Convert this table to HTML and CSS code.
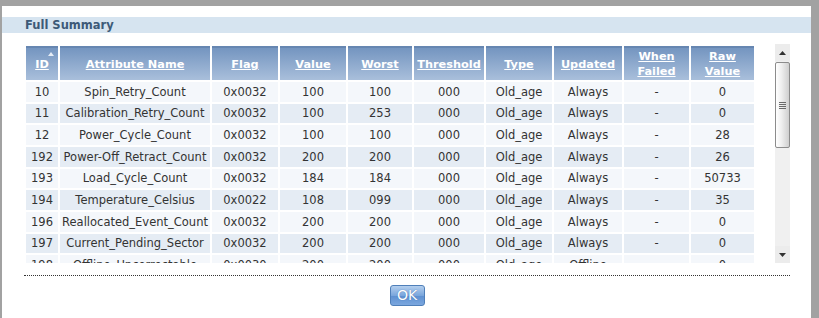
FILE: index.html
```html
<!DOCTYPE html>
<html>
<head>
<meta charset="utf-8">
<link rel="stylesheet" href="styles.css">
</head>
<body>
<div class="dialog">
  <div class="titlebar">Full Summary</div>
  <div class="content">
    <div class="scroller">
      <div class="viewport">
        <table class="grid">
          <colgroup>
            <col class="c-id"><col class="c-name"><col class="c-flag"><col class="c-value"><col class="c-worst"><col class="c-thr"><col class="c-type"><col class="c-upd"><col class="c-when"><col class="c-raw">
          </colgroup>
          <thead>
            <tr>
              <th class="sorted"><a>ID</a><span class="sort-arrow"></span></th>
              <th><a>Attribute Name</a></th>
              <th><a>Flag</a></th>
              <th><a>Value</a></th>
              <th><a>Worst</a></th>
              <th><a>Threshold</a></th>
              <th><a>Type</a></th>
              <th><a>Updated</a></th>
              <th><a>When<br>Failed</a></th>
              <th><a>Raw<br>Value</a></th>
            </tr>
          </thead>
          <tbody>
            <tr><td>10</td><td>Spin_Retry_Count</td><td>0x0032</td><td>100</td><td>100</td><td>000</td><td>Old_age</td><td>Always</td><td>-</td><td>0</td></tr>
            <tr><td>11</td><td>Calibration_Retry_Count</td><td>0x0032</td><td>100</td><td>253</td><td>000</td><td>Old_age</td><td>Always</td><td>-</td><td>0</td></tr>
            <tr><td>12</td><td>Power_Cycle_Count</td><td>0x0032</td><td>100</td><td>100</td><td>000</td><td>Old_age</td><td>Always</td><td>-</td><td>28</td></tr>
            <tr><td>192</td><td>Power-Off_Retract_Count</td><td>0x0032</td><td>200</td><td>200</td><td>000</td><td>Old_age</td><td>Always</td><td>-</td><td>26</td></tr>
            <tr><td>193</td><td>Load_Cycle_Count</td><td>0x0032</td><td>184</td><td>184</td><td>000</td><td>Old_age</td><td>Always</td><td>-</td><td>50733</td></tr>
            <tr><td>194</td><td>Temperature_Celsius</td><td>0x0022</td><td>108</td><td>099</td><td>000</td><td>Old_age</td><td>Always</td><td>-</td><td>35</td></tr>
            <tr><td>196</td><td>Reallocated_Event_Count</td><td>0x0032</td><td>200</td><td>200</td><td>000</td><td>Old_age</td><td>Always</td><td>-</td><td>0</td></tr>
            <tr><td>197</td><td>Current_Pending_Sector</td><td>0x0032</td><td>200</td><td>200</td><td>000</td><td>Old_age</td><td>Always</td><td>-</td><td>0</td></tr>
            <tr><td>198</td><td>Offline_Uncorrectable</td><td>0x0030</td><td>200</td><td>200</td><td>000</td><td>Old_age</td><td>Offline</td><td>-</td><td>0</td></tr>
          </tbody>
        </table>
      </div>
      <div class="scrollbar">
        <div class="sb-btn"><svg width="7" height="4" viewBox="0 0 7 4"><path d="M0 4 L3.5 0 L7 4 Z" fill="#333"/></svg></div>
        <div class="sb-thumb"><span class="grip"></span><span class="grip"></span><span class="grip"></span><span class="grip"></span></div>
        <div class="sb-track"></div>
        <div class="sb-btn"><svg width="7" height="4" viewBox="0 0 7 4"><path d="M0 0 L7 0 L3.5 4 Z" fill="#333"/></svg></div>
      </div>
    </div>
    <div class="divider"></div>
    <div class="actions"><button class="ok">OK</button></div>
  </div>
</div>
</body>
</html>
```
FILE: styles.css
```css
html, body {
  margin: 0;
  padding: 0;
  background: #a2a2a2;
  height: 318px;
  overflow: hidden;
}
.dialog {
  margin: 6px 0 0 2px;
  width: 809px;
  height: 312px;
  background: #fff;
  padding-top: 11px;
  box-sizing: border-box;
}
.titlebar {
  height: 16px;
  background: #d6e4f0;
  font: bold 11.5px/16px "DejaVu Sans", Verdana, sans-serif;
  color: #3d5a78;
  padding-left: 23px;
}
.content {
  padding: 11px 21px 0 22px;
}
.scroller {
  display: flex;
  height: 219px;
}
.viewport {
  flex: 1;
  overflow: hidden;
}
.grid {
  border-collapse: separate;
  border-spacing: 2px;
  table-layout: fixed;
  width: 732px;
  font: 11.5px "DejaVu Sans", Verdana, sans-serif;
  color: #333;
}
.c-id { width: 32px; }
.c-name { width: 150px; }
.c-flag { width: 66px; }
.c-value { width: 66px; }
.c-worst { width: 64px; }
.c-thr { width: 70px; }
.c-type { width: 66px; }
.c-upd { width: 68px; }
.c-when { width: 65px; }
.c-raw { width: 63px; }
.grid th {
  height: 34px;
  padding: 0;
  box-sizing: border-box;
  background: linear-gradient(#7495c0, #a9bfdb);
  border-top: 2px solid #6686b1;
  font-size: 11.3px;
  font-weight: bold;
  line-height: 15px;
  text-align: center;
  vertical-align: middle;
}
.grid th a {
  color: #fff;
  text-decoration: underline;
}
.grid th.sorted {
  position: relative;
}
.sort-arrow {
  position: absolute;
  left: 22px;
  top: 4px;
  width: 0;
  height: 0;
  border-left: 3px solid transparent;
  border-right: 3px solid transparent;
  border-bottom: 4px solid #e6edf6;
}
.grid td {
  height: 19.67px;
  padding: 0;
  box-sizing: border-box;
  text-align: center;
  white-space: nowrap;
  overflow: hidden;
  background: #f4f7fb;
}
.grid tbody tr:nth-child(even) td {
  background: #e5ecf4;
}
.scrollbar {
  width: 15px;
  margin-left: 19px;
  display: flex;
  flex-direction: column;
  background: #f0f0f0;
}
.sb-btn {
  height: 17px;
  display: flex;
  align-items: center;
  justify-content: center;
  background: #ececec;
}
.sb-thumb {
  margin-top: 1px;
  height: 86px;
  box-sizing: border-box;
  border: 1px solid #8c8c8c;
  border-radius: 2px;
  background: linear-gradient(to right, #ffffff, #f0f0f0 40%, #cfcfcf);
  display: flex;
  flex-direction: column;
  align-items: center;
  justify-content: center;
  gap: 1px;
}
.grip {
  display: block;
  width: 7px;
  height: 1px;
  background: #6a6a6a;
}
.sb-track {
  flex: 1;
}
.divider {
  margin-top: 12px;
  border-top: 1px dotted #333;
}
.actions {
  display: flex;
  justify-content: center;
  padding-top: 9px;
}
.ok {
  width: 35px;
  height: 21px;
  padding: 0;
  border: 1px solid #4f7fb9;
  border-radius: 3px;
  background: linear-gradient(#b4cfee, #7aa6dc 50%, #5d8fd0 51%, #7ba7de);
  color: #fff;
  font: 14px/19px "DejaVu Sans", Tahoma, sans-serif;
  text-shadow: 0 0 1px #3b6aa8;
}
```
